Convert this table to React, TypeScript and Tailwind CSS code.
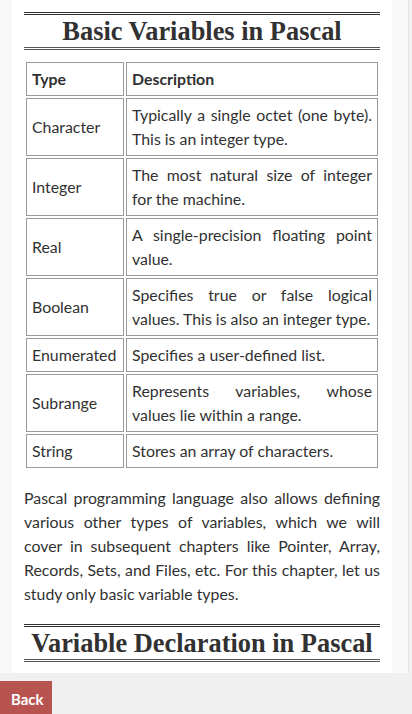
const rows: [string, string][] = [
  ['Character', 'Typically a single octet (one byte). This is an integer type.'],
  ['Integer', 'The most natural size of integer for the machine.'],
  ['Real', 'A single-precision floating point value.'],
  ['Boolean', 'Specifies true or false logical values. This is also an integer type.'],
  ['Enumerated', 'Specifies a user-defined list.'],
  ['Subrange', 'Represents variables, whose values lie within a range.'],
  ['String', 'Stores an array of characters.'],
];

function Heading({ children }: { children: string }) {
  return (
    <h2 className="border-t-[3px] border-b-[3px] border-double border-t-[#333] border-b-[#555] text-center font-['Liberation_Serif',Georgia,serif] text-[26.4px] font-bold leading-[32px] text-[#313131]">
      {children}
    </h2>
  );
}

export default function App() {
  return (
    <div className="flex h-[714px] w-[412px] flex-col overflow-hidden bg-[#f8f8f8] font-['Lato',sans-serif] text-[15.86px] text-[#313131]">
      <div className="flex min-h-0 flex-1">
        <div className="flex-1 overflow-hidden pl-3 pr-4">
          <div className="bg-white px-3 pt-3 pb-[11px]">
            <Heading>Basic Variables in Pascal</Heading>

            {/* Variable types table */}
            <table className="mt-[10px] w-full border-separate border-spacing-[2px] leading-6">
              <tbody>
                <tr>
                  <th className="w-[98px] border border-[#9a9a9a] px-[5px] py-1 text-left font-bold">Type</th>
                  <th className="border border-[#9a9a9a] px-[5px] py-1 text-left font-bold">Description</th>
                </tr>
                {rows.map(([type, desc]) => (
                  <tr key={type}>
                    <td className="border border-[#9a9a9a] px-[5px] py-1 align-middle whitespace-nowrap">{type}</td>
                    <td className="border border-[#9a9a9a] px-[5px] py-1 text-justify">{desc}</td>
                  </tr>
                ))}
              </tbody>
            </table>

            <p className="mt-[16px] text-justify leading-6">
              Pascal programming language also allows defining various other types of variables, which we will cover in
              subsequent chapters like Pointer, Array, Records, Sets, and Files, etc. For this chapter, let us study only
              basic variable types.
            </p>

            <div className="mt-[18px]">
              <Heading>Variable Declaration in Pascal</Heading>
            </div>
          </div>
        </div>
        <div className="w-1 border-l border-[#e6e6e6] bg-[#f1f1f1]" />
      </div>

      <div className="h-[41px] shrink-0 bg-[#f0f0f0] pt-2">
        <button className="h-[36px] w-[52px] bg-[#b85450] px-[11px] text-left text-[15px] font-bold text-white">
          Back
        </button>
      </div>
    </div>
  );
}
